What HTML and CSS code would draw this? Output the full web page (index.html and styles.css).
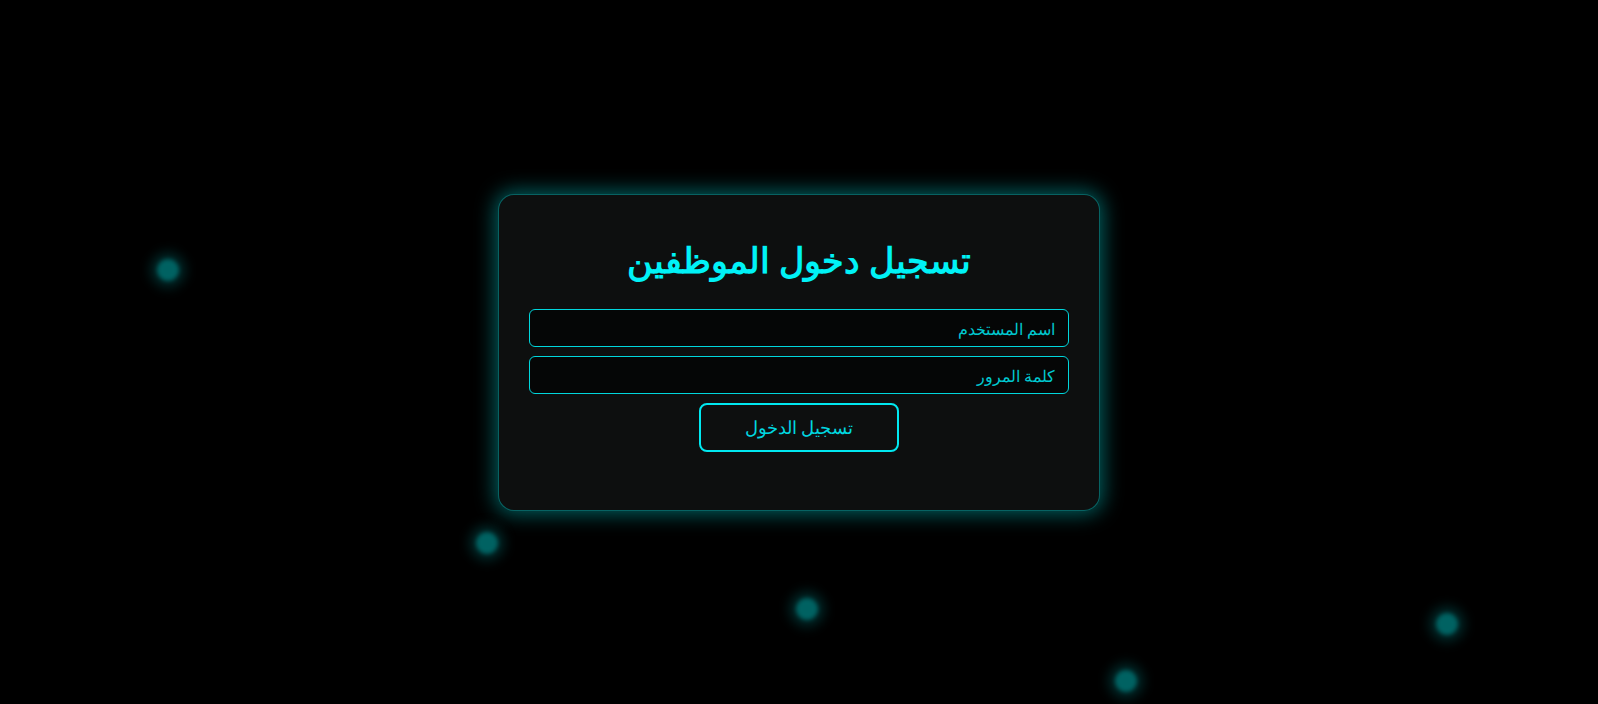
FILE: index.html
```html
<!DOCTYPE html>
<html lang="ar" dir="rtl">
<head>
<meta charset="utf-8">
<title>تسجيل دخول الموظفين</title>
<link rel="stylesheet" href="styles.css">
</head>
<body>
<div class="particle p1"></div>
<div class="particle p2"></div>
<div class="particle p3"></div>
<div class="particle p4"></div>
<div class="particle p5"></div>
<main class="card">
  <h2 class="title">تسجيل دخول الموظفين</h2>
  <form class="form">
    <input class="field" type="text" placeholder="اسم المستخدم">
    <input class="field" type="password" placeholder="كلمة المرور">
    <button class="btn" type="button">تسجيل الدخول</button>
  </form>
</main>
</body>
</html>
```
FILE: styles.css
```css
html, body {
  margin: 0;
  padding: 0;
  height: 100%;
}
body {
  background: #000;
  font-family: "Noto Sans", sans-serif;
  display: flex;
  align-items: center;
  justify-content: center;
  overflow: hidden;
  position: relative;
}
.card {
  width: 540px;
  padding: 30px 30px 58px;
  background: #0d0f0f;
  border: 1px solid rgba(0, 200, 200, 0.45);
  border-radius: 16px;
  box-shadow: 0 0 20px 3px rgba(0, 210, 210, 0.45);
  text-align: center;
}
.title {
  margin: 10px 0 24px;
  font-size: 35px;
  font-weight: bold;
  color: #00f2f6;
  line-height: 50px;
}
.form {
  display: flex;
  flex-direction: column;
  align-items: center;
  gap: 9px;
}
.field {
  box-sizing: border-box;
  width: 100%;
  height: 38px;
  padding: 3px 13px 0;
  background: #050606;
  border: 1px solid #00d6dc;
  border-radius: 6px;
  color: #00e0e6;
  font-family: "Noto Sans", sans-serif;
  font-size: 16px;
  outline: none;
}
.field::placeholder {
  color: #00c8d0;
  opacity: 1;
}
.btn {
  margin-top: 0;
  width: 200px;
  height: 49px;
  background: transparent;
  border: 2px solid #00e8f0;
  border-radius: 8px;
  color: #00d8e0;
  font-family: "Noto Sans", sans-serif;
  font-size: 18px;
  cursor: pointer;
}
.particle {
  position: absolute;
  width: 22px;
  height: 22px;
  border-radius: 50%;
  background: rgba(0, 115, 115, 0.85);
  box-shadow: 0 0 12px 6px rgba(0, 100, 100, 0.45);
  filter: blur(2px);
}
.p1 { left: 157px; top: 259px; }
.p2 { left: 476px; top: 532px; }
.p3 { left: 796px; top: 598px; }
.p4 { left: 1115px; top: 670px; }
.p5 { left: 1436px; top: 613px; }
```
